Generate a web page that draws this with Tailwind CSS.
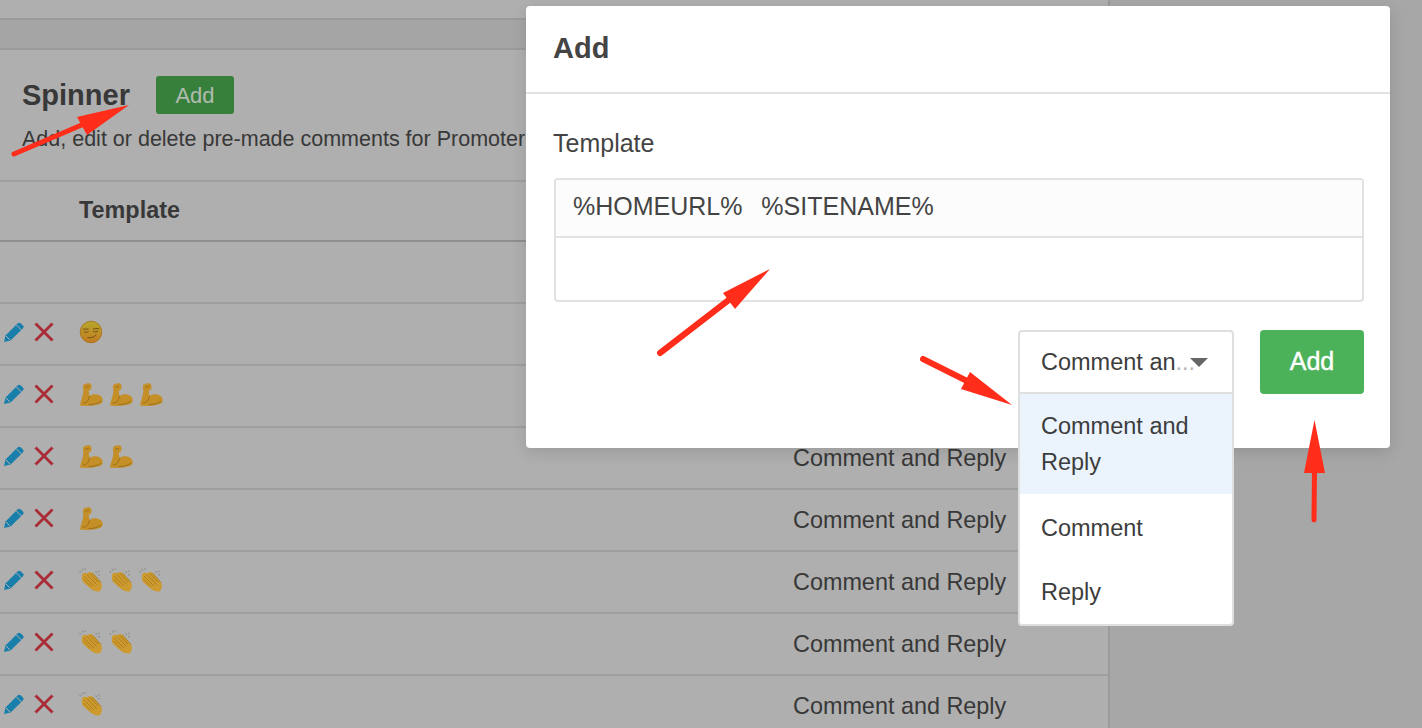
<!DOCTYPE html>
<html lang="en">

<head>
    <meta charset="UTF-8">
    <meta name="viewport" content="width=device-width, initial-scale=1.0">
    <title>Spinner</title>
    <script src="https://cdn.jsdelivr.net/npm/@tailwindcss/browser@4"></script>
</head>

<body class="relative h-[728px] overflow-hidden bg-[#a7a7a7] font-['Liberation_Sans',sans-serif] text-[#383838]">
    <!-- icons used in the table -->
    <svg class="absolute h-0 w-0">
        <defs>
            <linearGradient id="face" x1="0" y1="0" x2="0" y2="1">
                <stop offset="0" stop-color="#b5a82c" />
                <stop offset="1" stop-color="#c47a20" />
            </linearGradient>
            <symbol id="pencil" viewBox="0 0 20 20">
                <path fill="#177fa9" d="M0 20 1.5 13.5 13.5 1.5C14.6.4 15.6.4 16.6 1.3L19 3.6C19.900 4.600 19.800 5.600 18.800 6.600L6.600 18.600Z" />
                <path stroke="#afafaf" stroke-width="1" fill="none" d="M12.400 3 17.400 8M2 14l4.200 4.200" />
            </symbol>
            <symbol id="cross" viewBox="0 0 20 20">
                <path stroke="#a92b35" stroke-width="2.800" fill="none" d="M1.500 1.500 18.500 18.500M18.500 1.500 1.500 18.500" />
            </symbol>
            <symbol id="smirk" viewBox="0 0 24 24">
                <circle cx="12" cy="12" r="10.800" fill="url(#face)" stroke="#a86f1c" stroke-width=".8" />
                <path stroke="#6b4a14" stroke-width=".9" fill="none" d="M4 9.200 9.600 9M14 9 20 8.400M4.800 11.600C6 12.600 8 12.500 9.400 11.400M14.200 11.200C15.600 12.200 18 12 19.200 10.800M8.500 17.600C12 18.200 15.500 17.200 17.200 14.800" />
            </symbol>
            <symbol id="muscle" viewBox="0 0 24 24">
                <path fill="#c48f27" d="M0 23.500C.5 19 3 14 3.500 9L3 3C3.500.8 8-.3 10.500.5 12.500 1.500 12.500 5.500 11 7L9 8 10 13.500C13 11 18.500 11 21.500 13.500 24.500 16 24.500 20 21 22 15 24 6 24.500 0 23.500Z" />
                <path stroke="#94691a" stroke-width=".9" fill="none" d="M5.500 4.500 9.500 3.500M3 21C6.500 21 9 18.500 10 13.500M9 22.500C13.500 22.500 18.500 21.500 22 19" />
            </symbol>
            <symbol id="clap" viewBox="0 0 24 24">
                <path stroke="#8c8c8c" stroke-width="1.100" fill="none" d="M.5 3.200 2 4.200M3 .8 3.800 2.500M6 .3 6 2M16.500 3.500 18 4.500M20 2.500 20 4.200M19 6.500 21 7" />
                <path fill="#cc9a2e" d="M3.500 6C4.500 4.500 7 4.500 8.500 5.500 9.500 3.500 12 3.500 13.500 5L22 14.500C23.500 17 23 21 20.500 23.500 17 24 14 22.500 11.500 20.500L4 14C2.500 12 2.500 8 3.500 6Z" />
                <path stroke="#a97a1c" stroke-width=".9" fill="none" d="M5 8 15 18M8 6.500 17.500 16.500M11 5.500 19 14M4.500 11 12 18.500M13.500 5 22 14.500" />
            </symbol>
        </defs>
    </svg>

    <!-- page behind the dialog -->
    <div class="w-[1110px] border-r-2 border-[#9b9b9b] bg-[#afafaf]">
        <div class="h-[20px] border-b-2 border-[#9b9b9b]"></div>
        <div class="h-[30px] border-b-2 border-[#9b9b9b] bg-[#a5a5a5]"></div>
        <div class="h-[132px] border-b-2 border-[#9f9f9f] pl-[22px] pt-[26px]">
            <div class="flex items-center gap-[26px]">
                <h1 class="text-[29px] leading-[38px] font-bold text-[#383838]">Spinner</h1>
                <button class="h-[38px] w-[78px] rounded-[3px] bg-[#37803b] text-[22px] text-[#b1bbb1]">Add</button>
            </div>
            <p class="mt-[11px] text-[21.5px] leading-[28px] whitespace-nowrap">Add, edit or delete pre-made comments for Promoter</p>
        </div>
        <div class="flex h-[60px] items-center border-b-2 border-[#8f8f8f] pl-[79px] text-[23.4px] font-bold">Template</div>
        <div class="h-[62px] border-b-2 border-[#9f9f9f]"></div>

        <div class="flex h-[62px] items-center border-b-2 border-[#9f9f9f] pl-[4px]">
            <svg class="mb-[4px] h-5 w-5"><use href="#pencil" /></svg>
            <svg class="mb-[4px] ml-[10px] h-5 w-5"><use href="#cross" /></svg>
            <div class="mb-[4px] ml-[25px] flex"><svg class="h-[24px] w-[24px]"><use href="#smirk" /></svg></div>
        </div>
        <div class="flex h-[62px] items-center border-b-2 border-[#9f9f9f] pl-[4px]">
            <svg class="mb-[4px] h-5 w-5"><use href="#pencil" /></svg>
            <svg class="mb-[4px] ml-[10px] h-5 w-5"><use href="#cross" /></svg>
            <div class="mb-[4px] ml-[26px] flex gap-[7px]">
                <svg class="h-[23px] w-[23px]"><use href="#muscle" /></svg>
                <svg class="h-[23px] w-[23px]"><use href="#muscle" /></svg>
                <svg class="h-[23px] w-[23px]"><use href="#muscle" /></svg>
            </div>
        </div>
        <div class="flex h-[62px] items-center border-b-2 border-[#9f9f9f] pl-[4px]">
            <svg class="mb-[4px] h-5 w-5"><use href="#pencil" /></svg>
            <svg class="mb-[4px] ml-[10px] h-5 w-5"><use href="#cross" /></svg>
            <div class="mb-[4px] ml-[26px] flex w-[713px] gap-[7px]">
                <svg class="h-[23px] w-[23px]"><use href="#muscle" /></svg>
                <svg class="h-[23px] w-[23px]"><use href="#muscle" /></svg>
            </div>
            <span class="mt-[2px] text-[23.4px] whitespace-nowrap">Comment and Reply</span>
        </div>
        <div class="flex h-[62px] items-center border-b-2 border-[#9f9f9f] pl-[4px]">
            <svg class="mb-[4px] h-5 w-5"><use href="#pencil" /></svg>
            <svg class="mb-[4px] ml-[10px] h-5 w-5"><use href="#cross" /></svg>
            <div class="mb-[4px] ml-[26px] flex w-[713px] gap-[7px]">
                <svg class="h-[23px] w-[23px]"><use href="#muscle" /></svg>
            </div>
            <span class="mt-[2px] text-[23.4px] whitespace-nowrap">Comment and Reply</span>
        </div>
        <div class="flex h-[62px] items-center border-b-2 border-[#9f9f9f] pl-[4px]">
            <svg class="mb-[4px] h-5 w-5"><use href="#pencil" /></svg>
            <svg class="mb-[4px] ml-[10px] h-5 w-5"><use href="#cross" /></svg>
            <div class="mb-[4px] ml-[25px] flex w-[714px] gap-[6px]">
                <svg class="h-[24px] w-[24px]"><use href="#clap" /></svg>
                <svg class="h-[24px] w-[24px]"><use href="#clap" /></svg>
                <svg class="h-[24px] w-[24px]"><use href="#clap" /></svg>
            </div>
            <span class="mt-[2px] text-[23.4px] whitespace-nowrap">Comment and Reply</span>
        </div>
        <div class="flex h-[62px] items-center border-b-2 border-[#9f9f9f] pl-[4px]">
            <svg class="mb-[4px] h-5 w-5"><use href="#pencil" /></svg>
            <svg class="mb-[4px] ml-[10px] h-5 w-5"><use href="#cross" /></svg>
            <div class="mb-[4px] ml-[25px] flex w-[714px] gap-[6px]">
                <svg class="h-[24px] w-[24px]"><use href="#clap" /></svg>
                <svg class="h-[24px] w-[24px]"><use href="#clap" /></svg>
            </div>
            <span class="mt-[2px] text-[23.4px] whitespace-nowrap">Comment and Reply</span>
        </div>
        <div class="flex h-[62px] items-center border-b-2 border-[#9f9f9f] pl-[4px]">
            <svg class="mb-[4px] h-5 w-5"><use href="#pencil" /></svg>
            <svg class="mb-[4px] ml-[10px] h-5 w-5"><use href="#cross" /></svg>
            <div class="mb-[4px] ml-[25px] flex w-[714px] gap-[6px]">
                <svg class="h-[24px] w-[24px]"><use href="#clap" /></svg>
            </div>
            <span class="mt-[2px] text-[23.4px] whitespace-nowrap">Comment and Reply</span>
        </div>
    </div>

    <!-- dialog -->
    <div class="absolute top-[6px] left-[526px] h-[442px] w-[864px] rounded-[4px] bg-white text-[#444] shadow-[0_4px_16px_rgba(0,0,0,0.12)]">
        <div class="flex h-[88px] items-center border-b-2 border-[#e2e2e2] pb-px pl-[27px]">
            <h2 class="text-[29px] font-bold">Add</h2>
        </div>
        <div class="px-[26px] pt-[31px] pl-[27px]">
            <label class="block text-[25px] leading-[36px]">Template</label>
            <div class="mt-[17px] ml-px h-[124px] overflow-hidden rounded-[4px] border-2 border-[#e2e2e2]">
                <div class="flex h-[58px] items-center border-b-2 border-[#e2e2e2] bg-[#fcfcfc] pb-[2px] pl-[17px] text-[25px] whitespace-pre [word-spacing:2.5px]">%HOMEURL%  %SITENAME%</div>
            </div>
            <div class="mt-[28px] flex justify-end">
                <button class="h-[64px] w-[104px] rounded-[4px] bg-[#4cb25a] text-[25px] text-white [-webkit-text-stroke:0.4px_white]">Add</button>
            </div>
        </div>
    </div>

    <!-- open select, hangs out of the dialog -->
    <div class="absolute top-[330px] left-[1018px] w-[216px] overflow-hidden rounded-[4px] border-2 border-[#dfdfdf] bg-white text-[23.5px] leading-[36px] text-[#3d3d3d]">
        <div class="flex h-[62px] items-center border-b-2 border-[#dfdfdf] pl-[21px]">
            <span>Comment an</span><span class="text-[#b5b5b5]">...</span>
            <span class="ml-[-5px] h-0 w-0 border-x-[9px] border-t-[9px] border-x-transparent border-t-[#666]"></span>
        </div>
        <div class="bg-[#ebf4fd] px-[21px] py-[14px]">Comment and Reply</div>
        <div class="px-[21px] pt-[16px] pb-[14px]">Comment</div>
        <div class="px-[21px] py-[14px]">Reply</div>
    </div>

    <!-- red arrows drawn on the screenshot -->
    <svg class="absolute inset-0 h-[728px] w-[1422px]" fill="#ff2d1a" stroke="none">
        <path stroke="#ff2d1a" stroke-width="5" stroke-linecap="round" d="M14 154 84 124" />
        <path d="M129 105 77 117 87 135Z" />
        <path stroke="#ff2d1a" stroke-width="6" stroke-linecap="round" d="M660 353 730 299" />
        <path d="M770 269 723 293 735 309Z" />
        <path stroke="#ff2d1a" stroke-width="6" stroke-linecap="round" d="M923 359 967 381" />
        <path d="M1012 405 970 372 961 389Z" />
        <path stroke="#ff2d1a" stroke-width="5" stroke-linecap="round" d="M1314 520 1314.500 470" />
        <path d="M1314.500 420 1304 473 1325 473Z" />
    </svg>
</body>

</html>
